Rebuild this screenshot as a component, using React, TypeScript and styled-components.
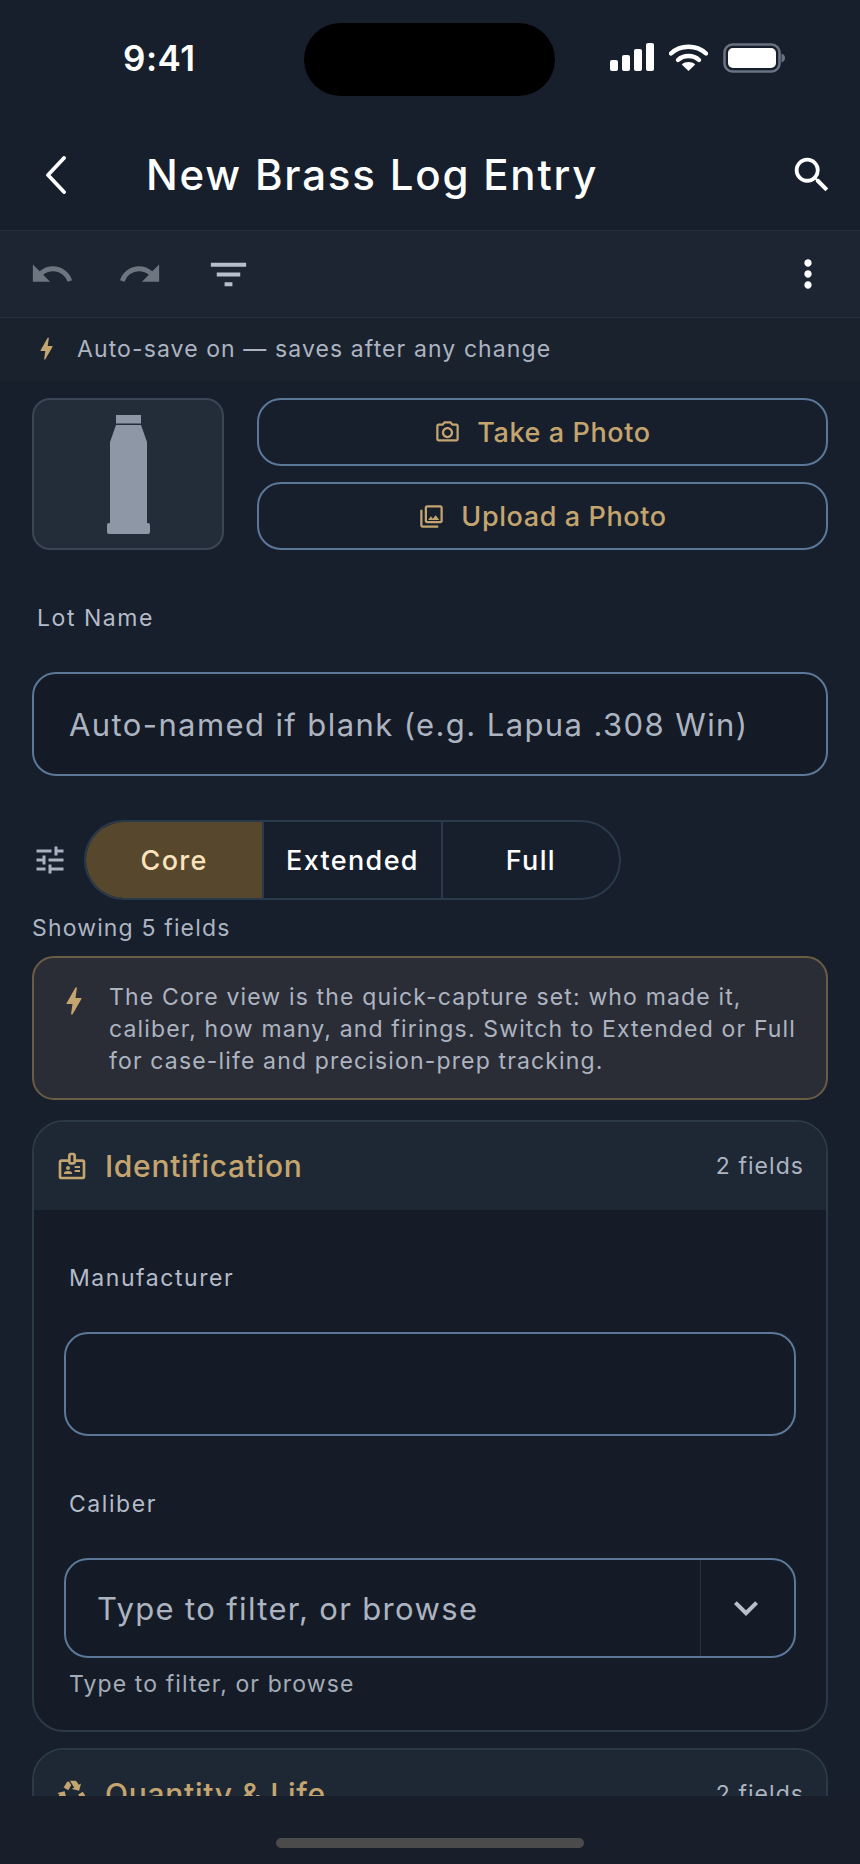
import React from "react";
import styled, { createGlobalStyle } from "styled-components";
import {
  MdSearch,
  MdUndo,
  MdRedo,
  MdFilterList,
  MdMoreVert,
  MdBolt,
  MdOutlinePhotoCamera,
  MdOutlinePhotoLibrary,
  MdTune,
  MdOutlineBadge,
  MdRecycling,
  MdKeyboardArrowDown,
} from "react-icons/md";

const GOLD = "#c4a56f";

const Global = createGlobalStyle`
  html, body { margin: 0; padding: 0; background: #171f2c; }
  * { box-sizing: border-box; }
  body { font-family: Inter, "Noto Sans", sans-serif; }
`;

const Screen = styled.div`
  width: 860px;
  height: 1864px;
  display: flex;
  flex-direction: column;
  background: #171f2c;
  overflow: hidden;
  color: #fff;
`;

const StatusBar = styled.div`
  height: 130px;
  flex: none;
  display: grid;
  grid-template-columns: 304px 251px 1fr;
  padding-top: 23px;
`;

const Time = styled.div`
  padding: 15px 0 0 123px;
  font-size: 35px;
  line-height: 40px;
  font-weight: 600;
  letter-spacing: 0.5px;
`;

const Island = styled.div`
  height: 73px;
  background: #000;
  border-radius: 37px;
`;

const StatusIcons = styled.div`
  display: flex;
  align-items: flex-start;
  gap: 15px;
  padding: 20px 0 0 55px;
`;

const Header = styled.header`
  height: 100px;
  flex: none;
  display: flex;
  align-items: center;
  padding: 0 25px 10px 45px;
`;

const Title = styled.h1`
  flex: 1;
  margin: 0 0 0 80px;
  font-size: 42px;
  line-height: 50px;
  font-weight: 500;
  letter-spacing: 1.8px;
`;

const SearchIcon = styled(MdSearch)`
  font-size: 46px;
`;

const Toolbar = styled.div`
  height: 88px;
  flex: none;
  display: flex;
  align-items: center;
  gap: 32px;
  padding: 0 24px;
  background: #1c2531;
  border-top: 1px solid #233040;
  border-bottom: 1px solid #233040;
`;

const ToolIcon = styled.span<{ $color: string; $size: number }>`
  display: flex;
  justify-content: center;
  width: 56px;
  font-size: ${(p) => p.$size}px;
  color: ${(p) => p.$color};
`;

const Spacer = styled.div`
  flex: 1;
`;

const SaveStrip = styled.div`
  height: 63px;
  flex: none;
  display: flex;
  align-items: center;
  padding: 0 0 2px 32px;
  background: #1a222e;
  font-size: 23px;
  letter-spacing: 1.1px;
  color: #adb4c1;
`;

const GoldBolt = styled(MdBolt)<{ $size: number }>`
  color: ${GOLD};
  font-size: ${(p) => p.$size}px;
  flex: none;
`;

const SaveBolt = styled(GoldBolt)`
  margin-right: 16px;
`;

const Scroll = styled.main`
  flex: 1;
  min-height: 0;
  overflow: hidden;
  padding: 17px 32px 0;
  background: #171f2c;
`;

const PhotoRow = styled.div`
  display: flex;
  gap: 33px;
`;

const Thumb = styled.div`
  width: 192px;
  height: 152px;
  flex: none;
  display: flex;
  align-items: center;
  justify-content: center;
  padding-left: 1px;
  background: #232d39;
  border: 2px solid #3a4655;
  border-radius: 18px;
`;

const PhotoButtons = styled.div`
  flex: 1;
  display: flex;
  flex-direction: column;
  gap: 16px;
`;

const PhotoButton = styled.div`
  flex: 1;
  display: flex;
  align-items: center;
  justify-content: center;
  gap: 16px;
  border: 2px solid #5b7899;
  border-radius: 24px;
  color: ${GOLD};
  font-size: 27px;
  font-weight: 500;
  letter-spacing: 0.6px;
  svg { font-size: 27px; }
`;

const FieldLabel = styled.div<{ $top: number }>`
  margin: ${(p) => p.$top}px 0 0 5px;
  font-size: 23px;
  line-height: 28px;
  font-weight: 400;
  letter-spacing: 1.55px;
  color: #b4bbc9;
`;

const TextInput = styled.div<{ $height: number; $top: number }>`
  height: ${(p) => p.$height}px;
  margin-top: ${(p) => p.$top}px;
  display: flex;
  align-items: center;
  padding: 0 35px;
  background: #141b26;
  border: 2px solid #5b7899;
  border-radius: 24px;
  font-size: 31px;
  letter-spacing: 1.4px;
  color: #adb4c1;
`;

const DensityRow = styled.div`
  display: flex;
  align-items: center;
  margin-top: 44px;
`;

const TuneIcon = styled(MdTune)`
  font-size: 36px;
  color: #a9b1c0;
  margin-right: 16px;
`;

const Segments = styled.div`
  width: 537px;
  height: 80px;
  display: flex;
  border: 2px solid #2b3a4b;
  border-radius: 40px;
  overflow: hidden;
`;

const Segment = styled.div<{ $active?: boolean }>`
  flex: 1;
  display: flex;
  align-items: center;
  justify-content: center;
  font-size: 27px;
  font-weight: 500;
  letter-spacing: 1.35px;
  background: ${(p) => (p.$active ? "#57472c" : "transparent")};
  color: ${(p) => (p.$active ? "#fbe4bd" : "#fff")};
  & + & { border-left: 2px solid #2b3a4b; }
`;

const Showing = styled.div`
  margin-top: 14px;
  font-size: 23px;
  line-height: 28px;
  letter-spacing: 1.15px;
  color: #adb4c1;
`;

const Info = styled.div`
  margin-top: 14px;
  height: 144px;
  display: flex;
  gap: 17px;
  padding: 23px 0 0 22px;
  background: #2a2d36;
  border: 2px solid #6b5c46;
  border-radius: 22px;
`;

const InfoText = styled.div`
  font-size: 23px;
  line-height: 32px;
  letter-spacing: 1.15px;
  color: #adb4c1;
  white-space: pre-line;
`;

const InfoBolt = styled(GoldBolt)`
  margin-top: 2px;
`;

const Card = styled.section`
  margin-top: 20px;
  border: 2px solid #2c3947;
  border-radius: 32px;
  background: #151c27;
  overflow: hidden;
  & + & { margin-top: 16px; }
`;

const CardHead = styled.div`
  height: 88px;
  display: flex;
  align-items: center;
  padding: 0 22px;
  background: #1e2834;
`;

const CardIcon = styled.span`
  display: flex;
  font-size: 32px;
  color: ${GOLD};
  margin-right: 17px;
`;

const CardTitle = styled.div`
  flex: 1;
  font-size: 30px;
  font-weight: 500;
  letter-spacing: 0.7px;
  color: ${GOLD};
`;

const CardCount = styled.div`
  font-size: 23px;
  letter-spacing: 1.05px;
  color: #adb4c1;
`;

const CardBody = styled.div`
  padding: 54px 30px 32px;
`;

const Combo = styled.div`
  height: 100px;
  margin-top: 40px;
  display: flex;
  background: #141b26;
  border: 2px solid #5b7899;
  border-radius: 24px;
  font-size: 31px;
  letter-spacing: 1.35px;
  color: #adb4c1;
`;

const ComboText = styled.div`
  flex: 1;
  display: flex;
  align-items: center;
  padding-left: 31px;
`;

const ComboButton = styled.div`
  width: 94px;
  display: flex;
  align-items: center;
  justify-content: center;
  padding-right: 4px;
  border-left: 1px solid #273241;
  font-size: 48px;
  color: #b8bfcc;
`;

const Helper = styled.div`
  margin: 12px 0 0 5px;
  font-size: 23px;
  line-height: 28px;
  letter-spacing: 1.1px;
  color: #a4acb8;
`;

const HomeBar = styled.footer`
  height: 68px;
  flex: none;
  display: flex;
  justify-content: center;
  padding-top: 42px;
  background: #181f2b;
`;

const HomeIndicator = styled.div`
  width: 308px;
  height: 10px;
  border-radius: 5px;
  background: #4b4b4b;
`;

const Back = () => (
  <svg width="21" height="38" viewBox="0 0 21 38" fill="none">
    <path d="M19 2L3 19L19 36" stroke="#fff" strokeWidth="3.8" strokeLinecap="round" strokeLinejoin="round" />
  </svg>
);

const Signal = () => (
  <svg width="44" height="28" viewBox="0 0 44 28" fill="#fff">
    <rect x="0" y="17" width="8" height="11" rx="2" />
    <rect x="12" y="12" width="8" height="16" rx="2" />
    <rect x="24" y="6" width="8" height="22" rx="2" />
    <rect x="36" y="0" width="8" height="28" rx="2" />
  </svg>
);

const Wifi = () => (
  <svg width="39" height="28" viewBox="0 0 39 28" fill="none">
    <path d="M2 10.5C11.5 1.5 27.5 1.5 37 10.5" stroke="#fff" strokeWidth="4.4" strokeLinecap="round" />
    <path d="M9 17C14.5 11.7 24.5 11.7 30 17" stroke="#fff" strokeWidth="4.4" strokeLinecap="round" />
    <path d="M19.5 28L12.8 21.4C16.4 18.2 22.6 18.2 26.2 21.4Z" fill="#fff" />
  </svg>
);

const Battery = () => (
  <svg width="62" height="30" viewBox="0 0 62 30" fill="none">
    <rect x="1.5" y="1.5" width="55" height="27" rx="8" stroke="#687280" strokeWidth="2.6" />
    <rect x="5" y="5" width="48" height="20" rx="5" fill="#fff" />
    <path d="M58.5 10.5C61 11 62 13 62 15C62 17 61 19 58.5 19.5Z" fill="#687280" />
  </svg>
);

const Cartridge = () => (
  <svg width="44" height="119" viewBox="0 0 44 119" fill="#8e97a6">
    <rect x="9" y="0" width="25" height="8.5" />
    <path d="M9 10H34L40 27V110H3V27Z" />
    <rect x="0" y="108" width="43" height="11" rx="2" />
  </svg>
);

export default function App() {
  return (
    <>
      <Global />
      <Screen>
        <StatusBar>
          <Time>9:41</Time>
          <Island />
          <StatusIcons>
            <Signal />
            <Wifi />
            <Battery />
          </StatusIcons>
        </StatusBar>
        <Header>
          <Back />
          <Title>New Brass Log Entry</Title>
          <SearchIcon />
        </Header>
        <Toolbar>
          <ToolIcon $color="#6d7580" $size={46}><MdUndo /></ToolIcon>
          <ToolIcon $color="#6d7580" $size={46}><MdRedo /></ToolIcon>
          <ToolIcon $color="#b8bfcc" $size={47}><MdFilterList /></ToolIcon>
          <Spacer />
          <ToolIcon $color="#fff" $size={44}><MdMoreVert /></ToolIcon>
        </Toolbar>
        <SaveStrip>
          <SaveBolt $size={29} />
          Auto-save on — saves after any change
        </SaveStrip>
        <Scroll>
          <PhotoRow>
            <Thumb><Cartridge /></Thumb>
            <PhotoButtons>
              <PhotoButton><MdOutlinePhotoCamera />Take a Photo</PhotoButton>
              <PhotoButton><MdOutlinePhotoLibrary />Upload a Photo</PhotoButton>
            </PhotoButtons>
          </PhotoRow>
          <FieldLabel $top={54}>Lot Name</FieldLabel>
          <TextInput $height={104} $top={40}>Auto-named if blank (e.g. Lapua .308 Win)</TextInput>
          <DensityRow>
            <TuneIcon />
            <Segments>
              <Segment $active>Core</Segment>
              <Segment>Extended</Segment>
              <Segment>Full</Segment>
            </Segments>
          </DensityRow>
          <Showing>Showing 5 fields</Showing>
          <Info>
            <InfoBolt $size={36} />
            <InfoText>{"The Core view is the quick-capture set: who made it,\ncaliber, how many, and firings. Switch to Extended or Full\nfor case-life and precision-prep tracking."}</InfoText>
          </Info>
          <Card>
            <CardHead>
              <CardIcon><MdOutlineBadge /></CardIcon>
              <CardTitle>Identification</CardTitle>
              <CardCount>2 fields</CardCount>
            </CardHead>
            <CardBody>
              <FieldLabel $top={0}>Manufacturer</FieldLabel>
              <TextInput $height={104} $top={40} />
              <FieldLabel $top={54}>Caliber</FieldLabel>
              <Combo>
                <ComboText>Type to filter, or browse</ComboText>
                <ComboButton><MdKeyboardArrowDown /></ComboButton>
              </Combo>
              <Helper>Type to filter, or browse</Helper>
            </CardBody>
          </Card>
          <Card>
            <CardHead>
              <CardIcon><MdRecycling /></CardIcon>
              <CardTitle>Quantity &amp; Life</CardTitle>
              <CardCount>2 fields</CardCount>
            </CardHead>
          </Card>
        </Scroll>
        <HomeBar><HomeIndicator /></HomeBar>
      </Screen>
    </>
  );
}
